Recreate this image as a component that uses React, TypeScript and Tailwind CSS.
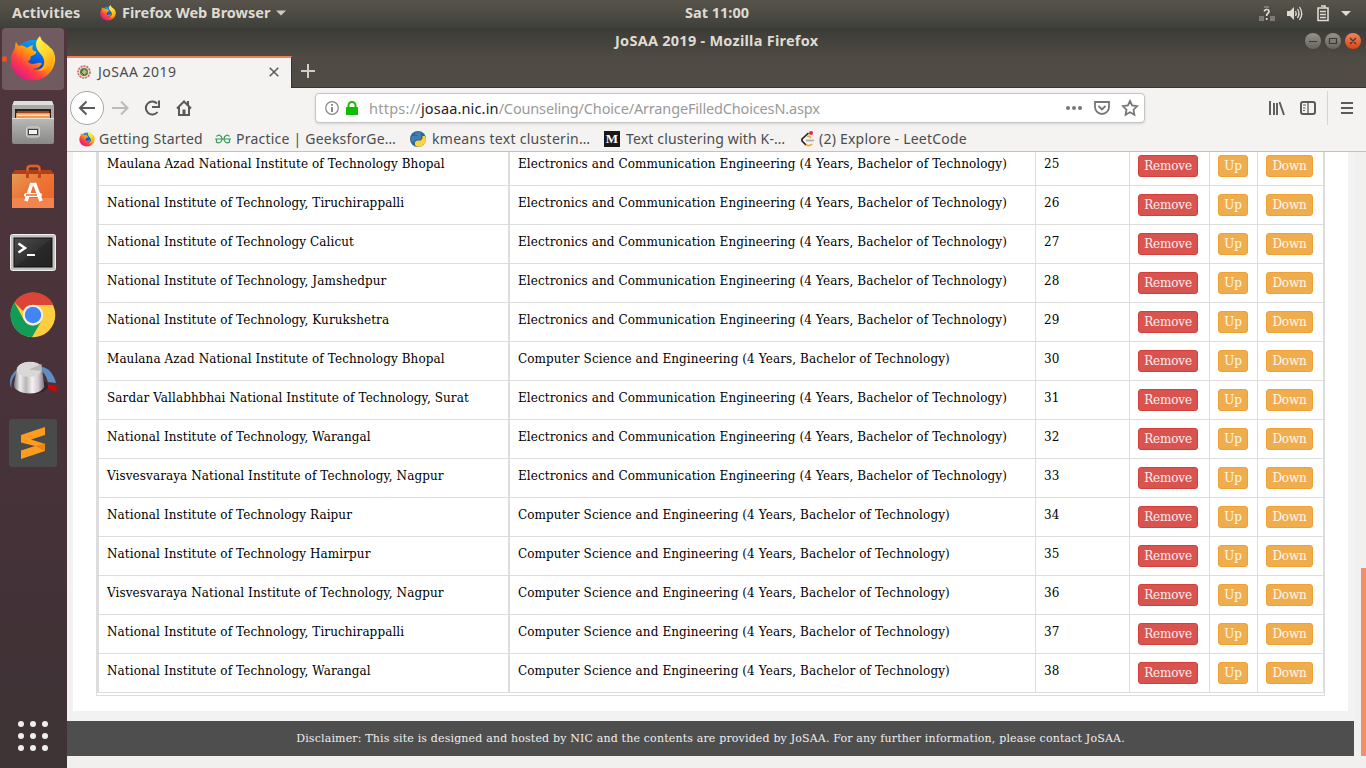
import React from "react";

const EC = "Electronics and Communication Engineering (4 Years, Bachelor of Technology)";
const CS = "Computer Science and Engineering (4 Years, Bachelor of Technology)";

const rows: [string, string, number][] = [
  ["Maulana Azad National Institute of Technology Bhopal", EC, 25],
  ["National Institute of Technology, Tiruchirappalli", EC, 26],
  ["National Institute of Technology Calicut", EC, 27],
  ["National Institute of Technology, Jamshedpur", EC, 28],
  ["National Institute of Technology, Kurukshetra", EC, 29],
  ["Maulana Azad National Institute of Technology Bhopal", CS, 30],
  ["Sardar Vallabhbhai National Institute of Technology, Surat", EC, 31],
  ["National Institute of Technology, Warangal", EC, 32],
  ["Visvesvaraya National Institute of Technology, Nagpur", EC, 33],
  ["National Institute of Technology Raipur", CS, 34],
  ["National Institute of Technology Hamirpur", CS, 35],
  ["Visvesvaraya National Institute of Technology, Nagpur", CS, 36],
  ["National Institute of Technology, Tiruchirappalli", CS, 37],
  ["National Institute of Technology, Warangal", CS, 38],
];

function FirefoxIcon({ size, id }: { size: number; id: string }) {
  return (
    <svg width={size} height={size} viewBox="0 0 46 46" className="shrink-0">
      <defs>
        <linearGradient id={id + "a"} x1="0.85" y1="0.1" x2="0.15" y2="0.9">
          <stop offset="0" stopColor="#ffe226" />
          <stop offset="0.4" stopColor="#ff9a0e" />
          <stop offset="0.7" stopColor="#ff3b47" />
          <stop offset="1" stopColor="#e31587" />
        </linearGradient>
        <linearGradient id={id + "b"} x1="0.6" y1="0" x2="0.4" y2="1">
          <stop offset="0" stopColor="#0aa0f5" />
          <stop offset="0.5" stopColor="#0560df" />
          <stop offset="1" stopColor="#2b1a83" />
        </linearGradient>
        <linearGradient id={id + "c"} x1="0.3" y1="0" x2="0.7" y2="1">
          <stop offset="0" stopColor="#fff44f" />
          <stop offset="0.5" stopColor="#ffd52b" />
          <stop offset="1" stopColor="#ff980e" />
        </linearGradient>
      </defs>
      <circle cx="23" cy="23" r="19" fill={`url(#${id}b)`} />
      <path d="M6 6c1 2 2 3 3 4 3-1 6 0 8 2 2-2 4-2 6-3-1 3-1 5 1 6 3 0 3 2 0 4l-3 1c-1 3 0 4-3 5 1 4 7 3 10 2 3-1 5 1 3 2-2 3-6 4-9 4 9 2 17-4 17-13 0-4-2-8-5-11l8 4c4 6 4 13 1 19-4 8-12 12.500-21 12.500C10 44.500 1 36 1 24c0-5 2-9 4-12 0-2 0-4 1-6z" fill={`url(#${id}a)`} />
      <path d="M30 0c-4 4-5 8-3 13 2 4 6 6 7 11 1 5-2 9-6 11 8 0 15-6 16-13 0-8-5-12-9-15-3-2-4-4-5-7z" fill={`url(#${id}c)`} />
    </svg>
  );
}

function FilesIcon() {
  return (
    <svg width="46" height="46" viewBox="0 0 46 46">
      <defs>
        <linearGradient id="fl" x1="0" y1="0" x2="0" y2="1">
          <stop offset="0" stopColor="#b9b9b8" />
          <stop offset="1" stopColor="#888887" />
        </linearGradient>
      </defs>
      <path d="M4 1h38l2 5v19H2V6z" fill="#aaa9a7" />
      <path d="M4 1h38l1.500 4h-41z" fill="#dfdfde" />
      <path d="M5 9h36v12H5z" fill="#2b211c" />
      <path d="M7 11h32v7H7z" fill="#a2451d" />
      <path d="M6 13h34v5H6z" fill="#f09a48" />
      <path d="M7 14.500h32v1.500H7z" fill="#f8e5cc" />
      <path d="M2 18h42v24q0 2-2 2H4q-2 0-2-2z" fill="url(#fl)" />
      <path d="M2 18h42v1H2z" fill="#e0e0df" />
      <rect x="16.500" y="27" width="13" height="10" rx="2" fill="#a8a8a7" stroke="#d5d5d4" />
      <rect x="18.500" y="29.500" width="9" height="5" fill="#f2f2f0" stroke="#444" />
    </svg>
  );
}

function SoftwareIcon() {
  return (
    <svg width="46" height="46" viewBox="0 0 46 46">
      <defs>
        <linearGradient id="sw" x1="0" y1="0" x2="1" y2="1">
          <stop offset="0" stopColor="#e59a53" />
          <stop offset="0.45" stopColor="#ee7436" />
          <stop offset="1" stopColor="#ea6126" />
        </linearGradient>
      </defs>
      <path d="M2 10l3-4h36l3 4z" fill="#ad4217" />
      <path d="M2 10h42v34H2z" fill="url(#sw)" />
      <path d="M2 34h42v10H2z" fill="#f28450" />
      <path d="M17.500 14V5q0-3 3-3h6q3 0 3 3v9" fill="none" stroke="#bf471b" strokeWidth="3" />
      <path d="M17.500 7V5q0-3 3-3h6q3 0 3 3v2" fill="none" stroke="#e76a35" strokeWidth="1.500" />
      <path d="M16 37l5.500-16.500h3.500l6 16.500" fill="none" stroke="#fff" strokeWidth="3.600" />
      <rect x="14" y="29" width="18" height="4" rx="2" fill="#fff" />
      <rect x="16" y="30.200" width="11" height="1.600" fill="#ee7436" />
    </svg>
  );
}

function TerminalIcon() {
  return (
    <svg width="46" height="38" viewBox="0 0 46 38">
      <defs>
        <linearGradient id="tm" x1="0" y1="0" x2="1" y2="1">
          <stop offset="0" stopColor="#4c4c4c" />
          <stop offset="0.5" stopColor="#333" />
          <stop offset="0.52" stopColor="#292929" />
          <stop offset="1" stopColor="#222" />
        </linearGradient>
      </defs>
      <rect x="0.500" y="0.500" width="45" height="36" rx="2" fill="#c4c4c4" stroke="#efefef" />
      <rect x="4" y="4" width="38" height="29" fill="url(#tm)" stroke="#111" />
      <path d="M8.500 9.500l6.500 4.500-6.500 4.500" fill="none" stroke="#fff" strokeWidth="2.500" />
      <path d="M17 21h8" stroke="#fff" strokeWidth="2" />
    </svg>
  );
}

function ChromeIcon() {
  return (
    <svg width="46" height="46" viewBox="0 0 46 46">
      <circle cx="23" cy="23" r="22.300" fill="#ffcd40" />
      <path d="M4.500 10.500A22.300 22.300 0 0 1 43.500 13H23a10 10 0 0 0-10 6z" fill="#db4437" />
      <path d="M4.500 10.500A22.300 22.300 0 0 0 22 45.300l10-17.300a10 10 0 0 1-18 0z" fill="#0f9d58" />
      <circle cx="23" cy="23" r="10.200" fill="#f1f1f1" />
      <circle cx="23" cy="23" r="8.200" fill="#4285f4" />
    </svg>
  );
}

function KnobIcon() {
  return (
    <svg width="50" height="38" viewBox="0 0 50 38">
      <defs>
        <linearGradient id="kn" x1="0" y1="0" x2="1" y2="0">
          <stop offset="0" stopColor="#777" />
          <stop offset="0.2" stopColor="#eee" />
          <stop offset="0.4" stopColor="#b8b5b6" />
          <stop offset="0.6" stopColor="#f3f1f2" />
          <stop offset="0.8" stopColor="#d7c7d2" />
          <stop offset="1" stopColor="#777" />
        </linearGradient>
      </defs>
      <path d="M3.500 27C-1 19 5 10 12 7l-1 3C6 14 2.500 20 3.500 27z" fill="#5d8cc4" />
      <path d="M33 6c8 0 13 8 15 16l-8-1q-2-8-7-11z" fill="#5f8dc6" />
      <path d="M39 23.500l9.500 1v7l-10-5z" fill="#d00505" />
      <ellipse cx="23" cy="25" rx="17" ry="8" fill="#302629" />
      <path d="M9 7Q13 1 21 .8q9 0 12.500 4l2.500 18q1 3-1 5-4 4.700-13 4.700T7.500 28q-2-2-1.500-5z" fill="url(#kn)" />
      <ellipse cx="21" cy="8.500" rx="12.200" ry="7.500" fill="#d9d8d7" />
      <path d="M21 8.500l12.500-5.500v7z" fill="#b9b8b7" />
    </svg>
  );
}

function SublimeIcon() {
  return (
    <svg width="48" height="48" viewBox="0 0 48 48">
      <rect width="48" height="48" rx="3" fill="#494b4b" />
      <path d="M12 16L36 8v8l-14 4.500L36 25v7l-24 8v-8.500L26 27l-14-3.500z" fill="#ff9b20" />
      <path d="M26 27l10-2.500V32z" fill="#e8860f" />
    </svg>
  );
}

function Dock() {
  return (
    <aside className="flex w-[67px] shrink-0 flex-col items-center bg-linear-to-b from-[#50363c] via-[#49323a] to-[#3d3335] pr-px">
      <div className="flex h-[62px] w-full items-center">
        <span className="ml-[2px] flex h-[62px] w-[62px] items-center rounded bg-[#705b60]">
          <span className="h-[6px] w-[5px] rounded-full bg-[#e95420]" />
          <span className="ml-[3px]"><FirefoxIcon size={46} id="dock" /></span>
        </span>
      </div>
      <div className="mt-[10px] h-[46px]"><FilesIcon /></div>
      <div className="mt-[18px] h-[46px]"><SoftwareIcon /></div>
      <div className="mt-[24px] h-[38px]"><TerminalIcon /></div>
      <div className="mt-[20px] h-[46px]"><ChromeIcon /></div>
      <div className="mt-[23px] h-[38px]"><KnobIcon /></div>
      <div className="mt-[20px] h-[48px]"><SublimeIcon /></div>
      <svg width="32" height="32" viewBox="0 0 32 32" className="mt-auto mb-[16px]">
        {[4, 16, 28].map((y) => [4, 16, 28].map((x) => <circle key={`${x}-${y}`} cx={x} cy={y} r="3" fill="#eee" />))}
      </svg>
    </aside>
  );
}

function TopBar() {
  return (
    <div className="flex h-[28px] shrink-0 items-center bg-linear-to-b from-[#58544c] to-[#3f403a] pb-[2px] text-[14.500px] font-bold text-[#dfdbd2]">
      <span className="ml-[12px] w-[88px] tracking-[0.12px]">Activities</span>
      <FirefoxIcon size={16} id="top" />
      <span className="ml-[6px] w-[154px] whitespace-nowrap">Firefox Web Browser</span>
      <svg width="10" height="6" viewBox="0 0 10 6"><path d="M0 .5h10L5 5.500z" fill="#cfcbc4" /></svg>
      <span className="ml-[399px] w-[70px] whitespace-nowrap">Sat 11:00</span>
      <svg width="100" height="18" viewBox="0 0 100 18" className="ml-auto mr-[8px]">
        <g fill="#7d7a74"><path d="M1 12h5v5H1zM12 12h5v5h-5zM6 2h5v2H6z" /></g>
        <path d="M6.500 7.500q0-2 2.200-2t2.200 2q0 1.200-1.200 2t-1 2.500M8.700 14v2" fill="none" stroke="#dfdbd2" strokeWidth="1.700" />
        <path d="M29 7h3l4-4v13l-4-4h-3z" fill="#dfdbd2" />
        <path d="M37.500 7q1.500 2.500 0 5M39.500 5q3 4.500 0 9M41.500 3q4.500 6.500 0 13" fill="none" stroke="#dfdbd2" strokeWidth="1.300" />
        <path d="M60 4h10v12.500H60zM63 2h4v2h-4M62 7.500h6M62 10.500h6M62 13.500h6" fill="none" stroke="#dfdbd2" strokeWidth="1.600" />
        <path d="M83 7h10l-5 5z" fill="#dfdbd2" />
      </svg>
    </div>
  );
}

function WindowHeader() {
  return (
    <div className="flex h-[60px] shrink-0 flex-col bg-linear-to-b from-[#3b3b36] via-[#4f4b44] to-[#504c45]">
      <div className="flex h-[28px] items-center pb-[2px] text-[14.500px] font-bold text-[#dfdbd2]">
        <span className="ml-[548px] tracking-[0.26px] whitespace-nowrap">JoSAA 2019 - Mozilla Firefox</span>
        <svg width="56" height="18" viewBox="0 0 56 18" className="ml-auto mr-[5px]">
          <defs>
            <linearGradient id="wb" x1="0" y1="0" x2="0" y2="1"><stop offset="0" stopColor="#96928b" /><stop offset="1" stopColor="#67645e" /></linearGradient>
            <linearGradient id="wc" x1="0" y1="0" x2="0" y2="1"><stop offset="0" stopColor="#f4845e" /><stop offset="1" stopColor="#db4416" /></linearGradient>
          </defs>
          <circle cx="8" cy="9" r="8" fill="url(#wb)" /><circle cx="28" cy="9" r="8" fill="url(#wb)" /><circle cx="48" cy="9" r="8" fill="url(#wc)" />
          <path d="M4 9.500h8M24.500 6.500h7v5h-7zM45 6l6 6M51 6l-6 6" fill="none" stroke="#3b3934" strokeWidth="1.200" />
        </svg>
      </div>
      <div className="flex h-[32px] border-b border-[#35342f]">
        <div className="-mb-px flex w-[225px] items-center border-t-2 border-r border-t-[#ef7f57] border-r-[#35342f] bg-[#f4f3f2] pb-[2px] text-[14px] text-[#4c4c4c]">
          <svg width="14" height="14" viewBox="0 0 14 14" className="ml-[10px]">
            <circle cx="7" cy="7" r="6" fill="#e4ddd0" stroke="#d45a5f" strokeWidth="1.500" strokeDasharray="2 1" />
            <circle cx="7" cy="7" r="4" fill="#517b58" /><path d="M4 9l3-5 3 3-3 3z" fill="#c7bc5b" /><path d="M4 7l3 3" stroke="#344a7b" />
          </svg>
          <span className="ml-[7px] -mt-px tracking-[0.5px]">JoSAA 2019</span>
          <svg width="10" height="10" viewBox="0 0 10 10" className="ml-auto mr-[12px]"><path d="M.7.7l8.600 8.600M9.300.7L.7 9.300" stroke="#5a5a5a" strokeWidth="1.500" /></svg>
        </div>
        <svg width="14" height="14" viewBox="0 0 14 14" className="mt-[8px] ml-[9px]"><path d="M7 0v14M0 7h14" stroke="#d0cdc7" strokeWidth="2" /></svg>
      </div>
    </div>
  );
}

function NavBar() {
  return (
    <div className="flex h-[40px] items-center">
      <svg width="130" height="36" viewBox="0 0 130 36" className="ml-[2px]" fill="none" stroke="#5a5a5a" strokeWidth="2">
        <circle cx="18" cy="18" r="16.500" fill="#fff" stroke="#a6a6a6" strokeWidth="1" />
        <path d="M26 18H11M17.500 11.500L11 18l6.500 6.500" />
        <path d="M43 18h15M52 11.500l6.500 6.500-6.500 6.500" stroke="#bcbbba" />
        <path d="M88.500 22a6.500 6.500 0 1 1-.5-8.500M90 10.500v6.500h-7" />
        <path d="M108 18.500l7-7 7 7M110 17v8h10v-8M119 11v4" /><path d="M115 19.500v5" strokeWidth="3" />
      </svg>
      <div className="ml-[116px] flex h-[30px] w-[830px] items-center rounded-[4px] border border-[#c5c4c3] bg-white shadow-sm">
        <svg width="14" height="14" viewBox="0 0 14 14" className="ml-[9px]"><circle cx="7" cy="7" r="6.300" fill="none" stroke="#848484" strokeWidth="1.200" /><path d="M7 6v5M7 3v1.800" stroke="#777" strokeWidth="1.700" /></svg>
        <svg width="12" height="14" viewBox="0 0 12 14" className="ml-[7px]"><path d="M0 6h12v8H0z" fill="#12bc00" /><path d="M2.500 7V4.500a3.500 3.500 0 0 1 7 0V7" fill="none" stroke="#12bc00" strokeWidth="2" /></svg>
        <span className="ml-[11px] pt-[2px] text-[14.500px] tracking-[-0.16px] whitespace-nowrap text-[#9a9a9a]"><span className="tracking-[0.25px]">https://<span className="text-[#222] tracking-[0.15px]">josaa.nic.in</span></span>/Counseling/Choice/ArrangeFilledChoicesN.aspx</span>
        <svg width="74" height="18" viewBox="0 0 74 18" className="ml-auto mr-[5px]" fill="none" stroke="#777" strokeWidth="1.800">
          <g fill="#777" stroke="none"><circle cx="3" cy="9" r="2" /><circle cx="9" cy="9" r="2" /><circle cx="15" cy="9" r="2" /></g>
          <path d="M30 3h14v5a7 7 0 0 1-14 0zM33.500 7l3.500 3.500L40.500 7" />
          <path d="M65 2l2.100 4.500 5 .7-3.600 3.500.9 5-4.400-2.400-4.400 2.400.9-5-3.600-3.500 5-.7z" />
        </svg>
      </div>
      <svg width="98" height="34" viewBox="0 0 98 34" className="ml-auto" fill="none" stroke="#5a5a5a" strokeWidth="2">
        <path d="M2 10v14M6 12v12M9 12v12M11.500 11l4.500 13" strokeWidth="1.900" />
        <rect x="33" y="11" width="14" height="12" rx="2" /><path d="M40 11v12" strokeWidth="1.300" /><path d="M35 14h3M35 17h2.500M35 19.500h2" strokeWidth="1" />
        <path d="M59.500 0v34" stroke="#d5d4d3" strokeWidth="1" /><path d="M73 12h12M73 17h12M73 22h12" />
      </svg>
    </div>
  );
}

function Bookmarks() {
  return (
    <div className="flex h-[23px] items-center pb-[2px] text-[14px] tracking-[0.22px] whitespace-nowrap text-[#4c4c4c]">
      <div className="ml-[12px] flex w-[136px] items-center gap-[4px]"><FirefoxIcon size={16} id="bm" /><span>Getting Started</span></div>
      <div className="flex w-[195px] items-center gap-[5px]">
        <svg width="16" height="12" viewBox="0 0 16 12" fill="none" stroke="#2f9c57" strokeWidth="1.200"><path d="M0 6h16M1.500 3.500Q3 1.500 5 2.500q2 1 2 3.500t-2 3.500Q3 10.500 1.500 9V6M14.500 3.500Q13 1.500 11 2.500q-2 1-2 3.500t2 3.500q2 1 3.500-.5V6" /></svg>
        <span>Practice | GeeksforGe…</span>
      </div>
      <div className="flex w-[194px] items-center gap-[6px]">
        <svg width="16" height="16" viewBox="0 0 16 16"><circle cx="8" cy="8" r="8" fill="#31678f" /><path d="M5 2q4-2 6 0v5l-2 1.500H5.500L4 11H2Q0 7 2 5h5V4H5z" fill="#3f7fb5" /><path d="M11 15.500q-5 1-6-1.500v-3l2-1.500h4L12.500 7V5H15q3 6-4 10.500z" fill="#ffd43b" /></svg>
        <span className="tracking-[0.3px]">kmeans text clusterin…</span>
      </div>
      <div className="flex w-[196px] items-center gap-[6px]">
        <span className="flex h-[16px] w-[16px] items-center justify-center bg-[#181818] font-['Liberation_Serif',serif] text-[13px] font-bold tracking-normal text-white">M</span>
        <span className="tracking-[0.15px]">Text clustering with K-…</span>
      </div>
      <div className="flex items-center gap-[4px]">
        <svg width="15" height="16" viewBox="0 0 15 16" fill="none" strokeWidth="1.700"><path d="M8.500 2L2 8v2l4 4" stroke="#222" /><path d="M6 13.500q3 2.500 6-.5M7 5.500q2-1 4 1.500" stroke="#f9a51a" /><path d="M6 9.500h8" stroke="#aaa" /><circle cx="11" cy="2" r="2" fill="#e22b4a" /></svg>
        <span>(2) Explore - LeetCode</span>
      </div>
    </div>
  );
}

const btn = "h-[22px] rounded-[3px] border text-center text-[12px] leading-[20px] tracking-[-0.15px] text-white/90";

function ChoiceTable() {
  return (
    <div className="w-[1229px] border border-t-0 border-[#ddd] bg-white pb-[2px]">
      <div className="w-[1227px] border-r border-l-2 border-[#ddd]">
        {rows.map(([inst, prog, n]) => (
          <div key={n} className="flex h-[39px] border-b border-[#ddd] text-[12px] leading-[17px] whitespace-nowrap text-black">
            <div className="w-[411px] border-r-2 border-[#ddd] pt-[9px] pl-[8px] tracking-[0.09px]">{inst}</div>
            <div className="w-[526px] border-r border-[#ddd] pt-[9px] pl-[8px] tracking-[0.1px]">{prog}</div>
            <div className="w-[94px] border-r border-[#ddd] pt-[9px] pl-[8px]">{n}</div>
            <div className="w-[80px] border-r border-[#ddd] pt-[8px] pl-[8px]"><div className={btn + " w-[60px] border-[#d43f3a] bg-[#d9534f]"}>Remove</div></div>
            <div className="w-[48px] border-r border-[#ddd] pt-[8px] pl-[8px]"><div className={btn + " w-[30px] border-[#eea236] bg-[#f0ad4e]"}>Up</div></div>
            <div className="pt-[8px] pl-[8px]"><div className={btn + " w-[47px] border-[#eea236] bg-[#f0ad4e]"}>Down</div></div>
          </div>
        ))}
      </div>
    </div>
  );
}

export default function App() {
  return (
    <div className="flex h-[768px] w-[1366px] flex-col overflow-hidden font-['Noto_Sans',sans-serif]">
      <TopBar />
      <div className="flex h-[740px]">
        <Dock />
        <main className="flex w-[1299px] flex-col">
          <WindowHeader />
          <div className="flex h-[64px] shrink-0 flex-col border-b border-[#c3c2c1] bg-[#f4f3f2]"><NavBar /><Bookmarks /></div>
          <div className="flex h-[616px] bg-[#f1f0ef]">
            <div className="flex w-[1287px] flex-col bg-[#f2f2f2] font-['DejaVu_Serif',serif]">
              <div className="ml-[6px] flex h-[559px] w-[1275px] shrink-0 items-end overflow-hidden bg-white pb-[15px] pl-[23px]"><ChoiceTable /></div>
              <div className="mt-[10px] flex h-[35px] shrink-0 items-center justify-center bg-[#4e4e4e] pt-px text-[11px] tracking-[0.165px] whitespace-nowrap text-[#eee]">Disclaimer: This site is designed and hosted by NIC and the contents are provided by JoSAA. For any further information, please contact JoSAA.</div>
              <div className="grow bg-[#f1f0ef]" />
            </div>
            <div className="mt-[416px] ml-auto h-[188px] w-[5px] bg-[#f08f69]" />
          </div>
        </main>
      </div>
    </div>
  );
}
